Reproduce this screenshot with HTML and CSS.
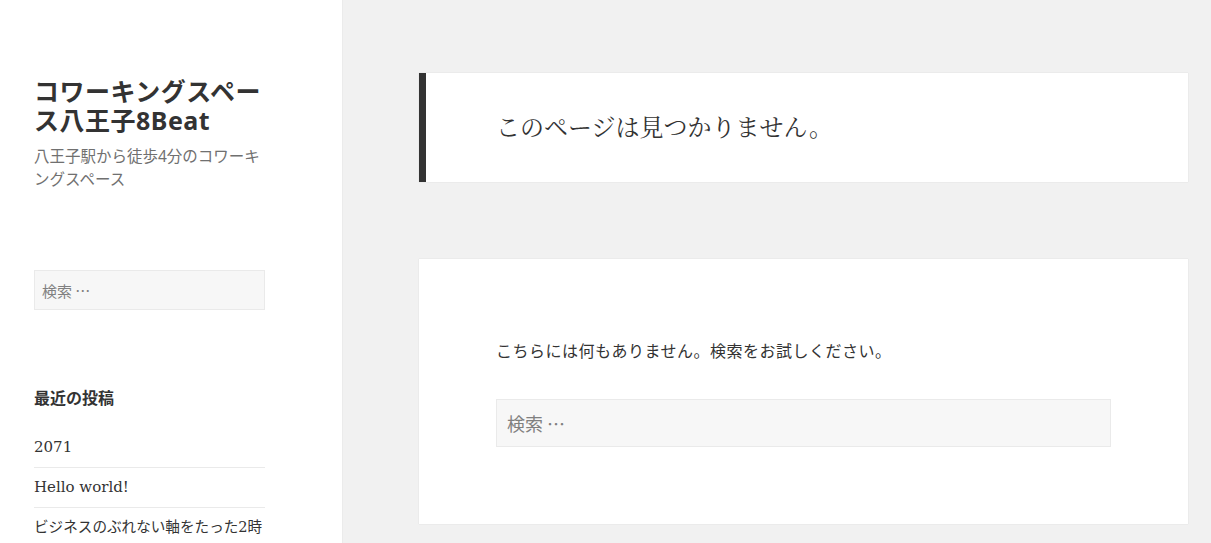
FILE: index.html
```html
<!DOCTYPE html>
<html lang="ja">
<head>
<meta charset="utf-8">
<title>ページが見つかりませんでした | コワーキングスペース八王子8Beat</title>
<link rel="stylesheet" href="styles.css">
</head>
<body>
<div class="page">
  <aside class="sidebar">
    <h1 class="site-title">コワーキングスペース八王子8Beat</h1>
    <p class="site-description">八王子駅から徒歩4分のコワーキングスペース</p>
    <form class="side-search"><input class="search-field" type="search" placeholder="検索 …"></form>
    <section class="widget">
      <h2 class="widget-title">最近の投稿</h2>
      <ul class="post-list">
        <li>2071</li>
        <li>Hello world!</li>
        <li>ビジネスのぶれない軸をたった2時間で</li>
      </ul>
    </section>
  </aside>
  <main class="content">
    <header class="page-header">
      <h1 class="page-title">このページは見つかりません。</h1>
    </header>
    <section class="page-content">
      <p class="message">こちらには何もありません。検索をお試しください。</p>
      <form class="main-search"><input class="search-field big" type="search" placeholder="検索 …"></form>
    </section>
  </main>
</div>
</body>
</html>
```
FILE: styles.css
```css
html, body {
  margin: 0;
  padding: 0;
  height: 100%;
  overflow: hidden;
}
body {
  background: #f1f1f1;
  color: #333333;
  font-family: "DejaVu Serif", "Noto Sans CJK JP", serif;
}
.page {
  display: flex;
  min-height: 100%;
}
.sidebar {
  width: 231px;
  flex: none;
  background: #ffffff;
  padding: 77px 77px 0 34px;
  box-shadow: 0 0 1px rgba(0, 0, 0, 0.15);
}
.site-title {
  margin: 0;
  font-family: "Noto Sans", "Noto Sans CJK JP", sans-serif;
  font-weight: 700;
  font-size: 25px;
  line-height: 29px;
  color: #333333;
  letter-spacing: 0.5px;
}
.site-description {
  margin: 10px 0 0;
  font-family: "Noto Sans", "Noto Sans CJK JP", sans-serif;
  font-size: 15.5px;
  line-height: 23px;
  color: #707070;
}
.side-search {
  margin-top: 79px;
}
.search-field {
  display: block;
  box-sizing: border-box;
  width: 100%;
  height: 40px;
  margin: 0;
  padding: 0 7px;
  background: #f7f7f7;
  border: 1px solid #eaeaea;
  border-radius: 0;
  font-family: "Noto Sans CJK JP", "Noto Sans", sans-serif;
  font-size: 15px;
  color: #333333;
  outline: none;
}
.search-field::placeholder {
  color: #808080;
}
.search-field.big {
  height: 48px;
  padding: 0 10px;
  font-size: 18px;
}
.widget {
  margin-top: 77px;
}
.widget-title {
  margin: 0 0 17px;
  font-family: "DejaVu Serif", "Noto Sans CJK JP", serif;
  font-size: 16px;
  font-weight: 700;
  line-height: 24px;
  color: #333333;
}
.post-list {
  list-style: none;
  margin: 0;
  padding: 0;
}
.post-list li {
  font-size: 15px;
  line-height: 24px;
  padding: 7px 0 8px;
  border-top: 1px solid #eaeaea;
}
.post-list li:last-child {
  font-size: 14.6px;
}
.post-list li:first-child {
  border-top: 0;
}
.content {
  flex: 1;
  padding: 73px 23px 0 77px;
}
.page-header {
  background: #ffffff;
  border-left: 7px solid #333333;
  padding: 38px 70px 37px;
  box-shadow: 0 0 1px rgba(0, 0, 0, 0.15);
}
.page-title {
  margin: 0;
  font-family: "DejaVu Serif", "Noto Serif CJK JP", "Noto Sans CJK JP", serif;
  font-weight: 400;
  font-size: 24px;
  line-height: 34px;
  color: #333333;
}
.page-content {
  margin-top: 77px;
  background: #ffffff;
  padding: 79px 77px 77px;
  box-shadow: 0 0 1px rgba(0, 0, 0, 0.15);
}
.message {
  margin: 0 0 33px;
  font-size: 16px;
  line-height: 28px;
  letter-spacing: 0.5px;
}
```
